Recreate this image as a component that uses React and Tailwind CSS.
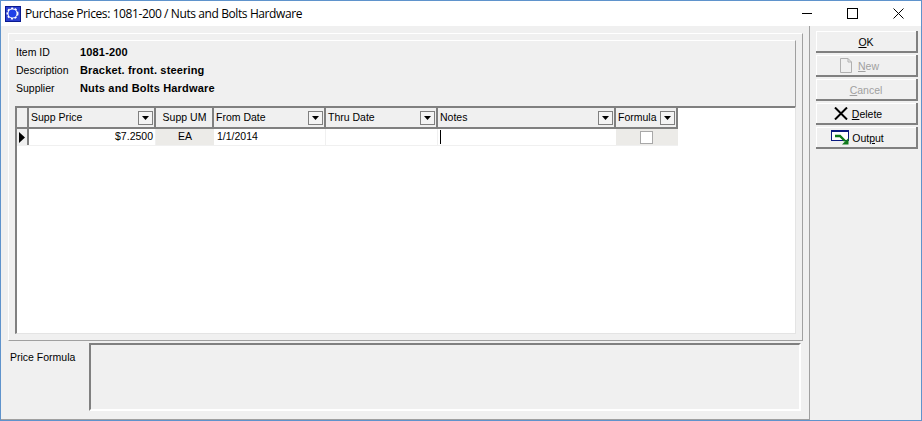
import React from "react";

const columns = [
  { title: "Supp Price", width: "w-[127px]", menu: true },
  { title: "Supp UM", width: "w-[58px]", center: true },
  { title: "From Date", width: "w-[112px]", menu: true },
  { title: "Thru Date", width: "w-[112px]", menu: true },
  { title: "Notes", width: "w-[178px]", menu: true },
  { title: "Formula", width: "w-[62px]", menu: true },
];

function AppIcon() {
  return (
    <svg width="16" height="16" viewBox="0 0 16 16">
      <rect x="0" y="0" width="15" height="15" fill="#2b3fd0" />
      <rect x="0.5" y="0.5" width="15" height="15" fill="none" stroke="#0a1a90" />
      <circle cx="7.5" cy="7.5" r="5" fill="#ffffff" strokeDasharray="2 1.6" stroke="#ffffff" strokeWidth="2" />
      <circle cx="7.5" cy="7.5" r="4" fill="#1f3fe8" />
    </svg>
  );
}

function TitleBar() {
  return (
    <div className="flex h-[25px] items-center bg-white">
      <div className="ml-[4px] mt-[1px] w-[20px]">
        <AppIcon />
      </div>
      <span className="text-[12px] tracking-[-0.4px] text-black [font-family:'Open_Sans',sans-serif]">
        Purchase Prices: 1081-200 / Nuts and Bolts Hardware
      </span>
      <div className="ml-auto mr-[17px] flex items-center gap-[35px]">
        <svg width="11" height="11" viewBox="0 0 11 11">
          <path d="M1 5.5H11" stroke="#000" />
        </svg>
        <svg width="11" height="11" viewBox="0 0 11 11">
          <rect x="0.5" y="0.5" width="10" height="10" fill="none" stroke="#000" />
        </svg>
        <svg width="11" height="11" viewBox="0 0 11 11">
          <path d="M0.5 0.5L10.5 10.5M10.5 0.5L0.5 10.5" stroke="#000" />
        </svg>
      </div>
    </div>
  );
}

function HeaderCell({ col }) {
  return (
    <div
      className={`${col.width} flex h-[19px] items-center border-r-2 border-[#808080] bg-[#f0f0f0] pl-[2px] pr-[1px] ${
        col.center ? "justify-center" : "justify-between"
      }`}
    >
      <span className="whitespace-nowrap">{col.title}</span>
      {col.menu && (
        <span className="flex h-[14px] w-[15px] items-center justify-center border border-[#808080] bg-[#f4f4f4]">
          <svg width="7" height="4" viewBox="0 0 7 4">
            <path d="M0 0H7L3.5 4Z" fill="#000" />
          </svg>
        </span>
      )}
    </div>
  );
}

function ItemGrid() {
  return (
    <div className="flex h-[228px] w-[781px] flex-col border-b border-l-2 border-r border-t-2 border-[#808080] border-b-[#e4e4e4] border-r-[#e4e4e4] bg-white">
      <div className="flex w-max border-b-2 border-[#808080]">
        <div className="h-[19px] w-[12px] border-r-2 border-[#808080] bg-[#f0f0f0]" />
        {columns.map((col) => (
          <HeaderCell key={col.title} col={col} />
        ))}
      </div>
      <div className="flex h-[17px] w-max border-b border-[#f0f0f0]">
        <div className="flex w-[12px] items-center justify-center border-r-2 border-[#808080] bg-[#f0f0f0]">
          <svg width="6" height="11" viewBox="0 0 6 11">
            <path d="M0 0L6 5.5L0 11Z" fill="#000" />
          </svg>
        </div>
        <div className="w-[127px] border-r border-[#f0f0f0] pr-[2px] text-right leading-[15px]">$7.2500</div>
        <div className="w-[58px] bg-[#ecebe8] text-center leading-[15px]">EA</div>
        <div className="w-[112px] border-r border-[#f0f0f0] pl-[3px] leading-[15px]">1/1/2014</div>
        <div className="w-[112px] border-r border-[#f0f0f0]" />
        <div className="w-[178px] pl-[2px] pt-[1px]">
          <div className="h-[14px] w-px bg-black" />
        </div>
        <div className="flex w-[62px] items-center justify-center bg-[#ecebe8] pr-[1px]">
          <div className="h-[13px] w-[13px] border border-[#a8a8a8] bg-white" />
        </div>
      </div>
    </div>
  );
}

function InfoRow({ label, value }) {
  return (
    <div className="flex h-[18px] items-center">
      <span className="w-[64px] pt-[1px]">{label}</span>
      <b className="text-[11px] font-bold tracking-[0.17px]">{value}</b>
    </div>
  );
}

function Btn({ children, disabled, shift = "", gap = "gap-[4px]" }) {
  return (
    <button
      className={`flex h-[22px] w-[102px] items-center justify-center border-b-2 border-r-2 border-[#808080] bg-[#f0f0f0] pt-[3px] shadow-[inset_1px_1px_0_#ffffff] ${shift} ${gap} ${
        disabled ? "text-[#a0a0a0]" : "text-black"
      }`}
    >
      {children}
    </button>
  );
}

export default function App() {
  return (
    <div className="flex h-[421px] w-[922px] flex-col overflow-hidden border border-[#5f93cc] bg-[#f0f0f0] text-[10.5px] text-black [font-family:'Liberation_Sans',Arial,sans-serif]">
      <TitleBar />
      <div className="flex flex-1">
        <div className="flex w-[809px] flex-col border-b border-r border-[#a0a0a0] pl-[7px] pt-[7px]">
          <div className="h-[308px] w-[795px] border border-[#a0a0a0] border-l-white border-t-white pl-[6px] pt-[6px]">
            <div className="h-[66px] w-[781px] border-r border-t border-[#a0a0a0] border-t-white pl-[1px] pt-[2px]">
              <InfoRow label="Item ID" value="1081-200" />
              <InfoRow label="Description" value="Bracket. front. steering" />
              <InfoRow label="Supplier" value="Nuts and Bolts Hardware" />
            </div>
            <ItemGrid />
          </div>
          <div className="flex pt-[2px]">
            <span className="w-[81px] pl-[2px] pt-[7px]">Price Formula</span>
            <div className="h-[68px] w-[712px] border-2 border-[#808080] border-b-white border-r-white" />
          </div>
        </div>
        <div className="flex flex-col gap-[2px] pl-[6px] pt-[5px]">
          <Btn>
            <span>
              <u>O</u>K
            </span>
          </Btn>
          <Btn disabled shift="pr-[13px]" gap="gap-[6px]">
            <svg width="12" height="15" viewBox="0 0 12 15" className="-mt-[2px]">
              <path d="M0.5 0.5H8L11.5 4V14.5H0.5Z M8 0.5V4H11.5" fill="none" stroke="#b0b0b0" />
            </svg>
            <span>
              <u>N</u>ew
            </span>
          </Btn>
          <Btn disabled>
            <span>
              <u>C</u>ancel
            </span>
          </Btn>
          <Btn shift="pr-[16px]" gap="gap-[4px]">
            <svg width="14" height="13" viewBox="0 0 14 13" className="-mt-[2px]">
              <path d="M1 0.5L13 12.5M13 0.5L1 12.5" stroke="#000" strokeWidth="2" />
            </svg>
            <span>
              <u>D</u>elete
            </span>
          </Btn>
          <Btn shift="pr-[17px]" gap="gap-[3px]">
            <svg width="18" height="15" viewBox="0 0 18 15" className="-mt-[2px]">
              <rect x="0.5" y="0.5" width="17" height="10" fill="#fff" stroke="#0a1a80" />
              <rect x="0" y="0" width="18" height="2" fill="#0a1a80" />
              <path d="M4 6H9L14 11" fill="none" stroke="#0f7a1a" strokeWidth="2.4" />
              <path d="M17.5 8V14.5H11Z" fill="#0f7a1a" />
            </svg>
            <span>
              Out<u>p</u>ut
            </span>
          </Btn>
        </div>
      </div>
    </div>
  );
}
